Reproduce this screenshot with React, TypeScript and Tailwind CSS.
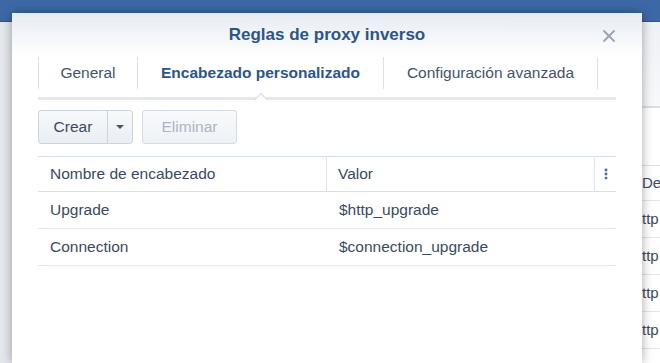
import { MoreVertical, X } from "lucide-react";

const rows = [
  { name: "Upgrade", value: "$http_upgrade" },
  { name: "Connection", value: "$connection_upgrade" },
];

function BackPage() {
  // the page that sits behind the dialog
  return (
    <div className="flex h-full flex-col">
      <div className="h-[22px] border-b border-[#2e5689] bg-[#3c69a6]" />
      <div className="flex flex-1">
        <div className="w-[12px] bg-[#e4e8ec]" />
        <div className="flex-1" />
        <div className="flex w-[18px] flex-col bg-white">
          <div className="h-[86px] border-b-2 border-[#d9dee4] bg-gradient-to-b from-[#eef1f5] to-[#f7f8fa]" />
          <div className="h-[58px] border-b border-[#d7e1ec]" />
          <div className="flex h-[35px] items-center border-b border-[#e1e7ee] text-[15px] text-[#3b4a5e]">Des</div>
          {[0, 1, 2, 3].map((i) => (
            <div key={i} className="flex h-[37px] items-center border-b border-[#e1e7ee] text-[15px] text-[#3b4a5e]">
              ttp
            </div>
          ))}
        </div>
      </div>
    </div>
  );
}

export default function App() {
  return (
    <div
      className="relative h-[363px] w-[660px] overflow-hidden bg-[#e9ecef]"
      style={{ fontFamily: '"Liberation Sans", Arial, sans-serif' }}
    >
      <BackPage />

      <div className="absolute left-[12px] top-[13px] bottom-0 w-[630px] bg-white shadow-[0_0_10px_rgba(0,0,0,0.35)]">
        {/* header */}
        <div className="relative flex h-[44px] items-center justify-center bg-gradient-to-b from-[#e6ecf3] to-white">
          <h1 className="text-[17px] font-bold text-[#2c5588]">Reglas de proxy inverso</h1>
          <button className="absolute right-[23px] top-[13px] text-[#9ba3ad]">
            <X size={20} strokeWidth={2.2} />
          </button>
        </div>

        <div className="px-[26px]">
          {/* tabs */}
          <div className="relative border-b-[3px] border-[#e4e7eb]">
            <div className="flex h-[40px] items-start">
              <div className="flex h-[32px] w-[100px] items-center justify-center border-x border-[#dbe2ea] text-[15.5px] text-[#46536a]">
                General
              </div>
              <div className="relative flex h-[32px] w-[246px] items-center justify-center border-r border-[#dbe2ea] text-[15.5px] font-bold text-[#2c5588]">
                Encabezado personalizado
              </div>
              <div className="flex h-[32px] w-[214px] items-center justify-center border-r border-[#dbe2ea] text-[15.5px] text-[#46536a]">
                Configuración avanzada
              </div>
            </div>
            <div className="absolute left-[216px] bottom-[-4px] h-[10px] w-[14px] overflow-hidden">
              <div className="mx-auto mt-[4px] h-[10px] w-[10px] rotate-45 border-l border-t border-[#d6dbe1] bg-white" />
            </div>
          </div>

          {/* toolbar */}
          <div className="mt-[10px] flex gap-[9px]">
            <div className="flex h-[34px] overflow-hidden rounded-[3px] border border-[#c9d4df] bg-gradient-to-b from-[#f7f9fb] to-[#e9eef4]">
              <button className="w-[69px] border-r border-[#c9d4df] text-[15.5px] text-[#3b4a5e]">Crear</button>
              <button className="flex w-[24px] items-center justify-center">
                <span className="h-0 w-0 border-x-[4px] border-t-[4px] border-x-transparent border-t-[#4a5568]" />
              </button>
            </div>
            <button className="h-[34px] w-[95px] rounded-[3px] border border-[#d3dce5] bg-gradient-to-b from-[#f8fafc] to-[#eef2f6] text-[15.5px] text-[#a8b6c5]">
              Eliminar
            </button>
          </div>

          {/* table */}
          <div className="mt-[12px] text-[15.5px] text-[#3b4a5e]">
            <div className="flex h-[36px] border-y border-[#d5e0eb]">
              <div className="flex w-[289px] items-center border-r border-[#dde5ee] pl-[12px]">Nombre de encabezado</div>
              <div className="flex flex-1 items-center border-r border-[#dde5ee] pl-[11px]">Valor</div>
              <div className="flex w-[21px] items-center justify-center text-[#3c69a6]">
                <MoreVertical size={14} strokeWidth={3} />
              </div>
            </div>
            {rows.map((r) => (
              <div key={r.name} className="flex h-[37px] border-b border-[#e1e7ee]">
                <div className="flex w-[289px] items-center pl-[12px]">{r.name}</div>
                <div className="flex flex-1 items-center pl-[12px]">{r.value}</div>
              </div>
            ))}
          </div>
        </div>
      </div>
    </div>
  );
}
